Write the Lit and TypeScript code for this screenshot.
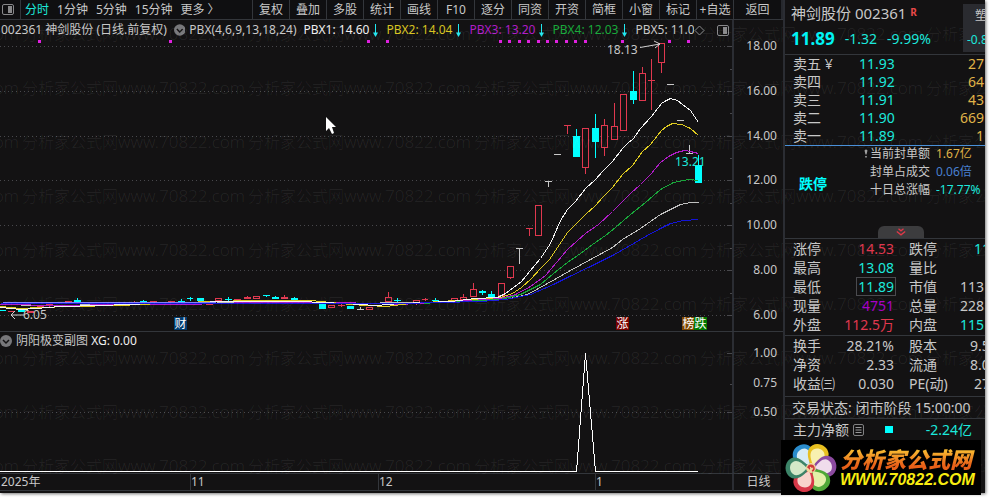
import { LitElement, html, svg, css } from "lit";
import { customElement } from "lit/decorators.js";

const RED = "#e0384f";
const CYAN = "#00ffff";
const GREY = "#c8c8c8";

/* x = left edge, w = body width, top/bottom = body, hi/lo = wick ends */
type Candle = [kind: "up" | "down", x: number, w: number, top: number, bottom: number, hi: number, lo: number];

const candles: Candle[] = [
  ["down", 18, 7, 310, 312, 310, 312],
  ["up", 27, 7, 311, 313, 311, 313],
  ["up", 37, 7, 305, 307, 305, 307],
  ["up", 46, 7, 304, 306, 304, 308],
  ["up", 65, 7, 301, 302, 301, 302],
  ["down", 74, 7, 300, 302, 298, 302],
  ["up", 131, 7, 302, 303, 301, 303],
  ["down", 140, 7, 301, 303, 300, 303],
  ["up", 150, 7, 301, 303, 301, 303],
  ["up", 168, 7, 301, 302, 301, 302],
  ["down", 178, 7, 301, 302, 299, 302],
  ["down", 187, 6, 298, 299, 297, 301],
  ["down", 197, 7, 298, 301, 298, 301],
  ["up", 206, 7, 304, 305, 304, 305],
  ["up", 215, 7, 298, 301, 298, 302],
  ["down", 225, 7, 299, 300, 297, 302],
  ["up", 234, 7, 299, 300, 299, 301],
  ["up", 244, 7, 297, 299, 296, 299],
  ["up", 253, 7, 296, 299, 296, 299],
  ["down", 263, 7, 295, 296, 295, 297],
  ["down", 272, 7, 297, 299, 296, 299],
  ["up", 281, 7, 297, 299, 295, 299],
  ["down", 291, 7, 298, 300, 297, 300],
  ["down", 300, 7, 303, 304, 303, 304],
  ["up", 310, 6, 303, 304, 303, 304],
  ["down", 319, 7, 304, 309, 302, 309],
  ["up", 328, 7, 305, 308, 305, 308],
  ["up", 338, 7, 305, 306, 304, 307],
  ["down", 347, 7, 306, 309, 306, 309],
  ["up", 366, 7, 307, 310, 307, 310],
  ["up", 385, 7, 297, 302, 292, 302],
  ["down", 394, 7, 300, 301, 298, 302],
  ["up", 413, 7, 300, 303, 300, 305],
  ["up", 422, 6, 299, 300, 298, 301],
  ["down", 432, 7, 300, 301, 298, 302],
  ["up", 441, 7, 301, 302, 301, 302],
  ["up", 451, 7, 298, 301, 298, 301],
  ["up", 460, 7, 297, 300, 294, 300],
  ["up", 470, 7, 289, 297, 283, 297],
  ["down", 479, 7, 291, 293, 290, 295],
  ["down", 488, 7, 294, 298, 291, 298],
  ["up", 498, 7, 283, 296, 283, 296],
  ["up", 507, 7, 266, 278, 266, 279],
  ["up", 535, 7, 205, 236, 205, 236],
  ["down", 573, 7, 136, 157, 129, 157],
  ["up", 582, 7, 128, 168, 128, 174],
  ["down", 592, 7, 128, 142, 114, 158],
  ["up", 601, 7, 125, 148, 119, 156],
  ["up", 611, 7, 126, 140, 103, 140],
  ["up", 620, 7, 94, 131, 94, 131],
  ["down", 630, 7, 91, 100, 71, 104],
  ["up", 639, 7, 73, 101, 67, 101],
  ["up", 658, 7, 43, 63, 43, 73],
  ["down", 695, 7, 165, 183, 155, 183],
];

/* candles that opened and closed at one price */
const flats: [color: string, x: number, y: number, hi: number, lo: number][] = [
  [CYAN, 2, 310, 310, 310],
  [RED, 11, 311, 311, 311],
  [GREY, 360, 309, 307, 309],
  [RED, 445, 301, 301, 301],
  [GREY, 519, 248, 248, 264],
  [RED, 529, 228, 228, 236],
  [GREY, 548, 181, 181, 187],
  [GREY, 557, 154, 154, 154],
  [RED, 567, 125, 125, 134],
  [RED, 651, 80, 59, 110],
  [GREY, 670, 84, 84, 84],
  [GREY, 680, 120, 120, 120],
  [GREY, 689, 153, 145, 153],
];

const averages: [color: string, points: string][] = [
  ["#c0c0c0", "0,304 40,305 120,304 250,302 350,303 470,301 505,299 527,294 547,283 570,270 590,259 612,247 622,239 640,228 660,214 672,208 680,204 690,202 698,202"],
  ["#18a83a", "420,303 480,300 500,299 520,294 540,284 553,273 567,262 580,253 592,244 605,235 615,227 630,214 645,202 660,189 673,182 688,179 698,180"],
  ["#b01cc8", "0,304 60,305 120,304 185,304 250,302 340,302 400,304 480,299 500,298 515,294 530,286 545,275 567,249 576,241 585,233 598,224 612,211 630,193 640,184 650,174 660,162 668,156 676,152 684,150 690,151 698,153"],
  ["#e0cc20", "0,306 20,308 40,307 70,306 120,305 180,302 250,300 310,300 350,304 385,306 410,303 470,299 500,297 512,293 521,287 530,279 540,268 549,259 557,247 567,232 576,223 585,214 595,205 603,196 612,187 622,174 632,165 642,151 650,144 661,130 666,126 672,123 681,124 690,128 698,135"],
  ["#f4f4f4", "0,307 20,309 35,308 60,306 100,305 180,302 240,301 300,301 345,303 375,305 400,303 450,301 475,298 497,297 505,293 513,287 521,281 530,270 540,258 550,243 560,220 567,209 575,201 585,188 595,179 602,171 612,161 622,148 627,143 633,138 640,128 651,116 661,103 666,100 670,98 677,100 682,104 690,110 698,122"],
  ["#1414d8", "0,303 250,303 400,303 440,302 480,301 505,299 530,294 553,284 567,277 590,266 612,255 628,246 645,236 660,228 670,223 683,220 698,219"],
  ["#8080ff", "2,302 160,302 215,302"],
];

const signals = [38, 169, 367, 386, 499, 508, 518, 527, 537, 546, 555, 565, 574, 584, 621, 668, 687];
const prices = ["18.00", "16.00", "14.00", "12.00", "10.00", "8.00", "6.00"];
const gridY = [46, 91, 136, 180, 225, 270, 315];
const minorY = [69, 113, 158, 203, 248, 293];

const badges: [label: string, color: string, x: number][] = [
  ["财", "#003c70", 174],
  ["涨", "#780000", 616],
  ["榜", "#804800", 682],
  ["跌", "#007800", 694],
];

const periods = ["分时", "1分钟", "5分钟", "15分钟"];
const tools = ["复权", "叠加", "多股", "统计", "画线", "F10", "逐分", "同资", "开资", "简框", "小窗", "标记", "+自选"];

const indicators = [
  ["PBX1: 14.60", "white"],
  ["PBX2: 14.04", "yellow"],
  ["PBX3: 13.20", "purple"],
  ["PBX4: 12.03", "green"],
];

const asks = [
  ["卖五", "11.93", "27"],
  ["卖四", "11.92", "64"],
  ["卖三", "11.91", "43"],
  ["卖二", "11.90", "669"],
  ["卖一", "11.89", "1"],
];

/* label, value, value class, label, value, value class */
const dayStats = [
  ["涨停", "14.53", "red", "跌停", "11", "price teal"],
  ["最高", "13.08", "teal", "量比", "", "price"],
  ["最低", "11.89", "teal boxed", "市值", "113", "amount"],
  ["现量", "4751", "violet", "总量", "228", "amount"],
  ["外盘", "112.5万", "red", "内盘", "115", "amount teal"],
];
const baseStats = [
  ["换手", "28.21%", "", "股本", "9.5", "money"],
  ["净资", "2.33", "", "流通", "8.0", "money"],
  ["收益㈢", "0.030", "", "PE(动)", "27", "price"],
];

const petals: [color: string, inner: string, angle: number][] = [
  ["#2a8ccc", "#d8ecf4", -30],
  ["#e8c020", "#f8f0b0", 27],
  ["#8c4aa0", "#f0dcec", 84],
  ["#50a838", "#e4f0a8", 146],
  ["#d83848", "#f8d4cc", 207],
  ["#3c8468", "#d4e8c8", 270],
];

@customElement("app-root")
export class AppRoot extends LitElement {
  static styles = css`
    :host {
      display: block;
      box-sizing: border-box;
      min-height: 100vh;
      padding: 0 6px 5px 0;
      background: #fff;
      color: #c8c8c8;
      font: 12px/18px "Noto Sans", "Noto Sans CJK SC", sans-serif;
    }
    * { box-sizing: border-box; }
    button {
      margin: 0;
      padding: 0;
      border: 0;
      background: none;
      color: inherit;
      font: inherit;
      cursor: pointer;
      white-space: nowrap;
    }
    svg { display: block; }
    table { border-spacing: 0; table-layout: fixed; }
    th, td { padding: 0; font-weight: 400; text-align: left; white-space: nowrap; }

    .frame {
      position: relative;
      display: grid;
      grid-template-columns: minmax(0, 1fr) 202px;
      min-height: calc(100vh - 5px);
      background: #131213;
      box-shadow: 1px 1px 3px #777;
    }
    .watermark {
      position: absolute;
      inset: 0;
      overflow: hidden;
      padding-top: 20px;
      color: rgba(255, 255, 255, 0.08);
      font-weight: 300;
      pointer-events: none;
    }
    .mark-row { display: flex; height: 54px; margin-left: -204px; line-height: 27px; }
    .mark { flex: 0 0 226px; font-size: 17px; white-space: nowrap; }
    .mark-cn { font-size: 16px; }

    .main { display: grid; grid-template-rows: 20px minmax(0, 312fr) minmax(0, 141fr) 20px; min-width: 0; }
    .toolbar { display: flex; border-bottom: 1px solid #33363b; background: #0f0f11; }
    .toolbar button { line-height: 16px; }
    .layout-button { width: 21px; padding-left: 2px; border-right: 1px solid #33363b; }
    .periods { display: flex; gap: 8px; padding-left: 4px; }
    .current { color: #1ce8dc; }
    .tools { display: flex; margin-left: auto; }
    .tool { width: 37px; border-left: 1px solid #33363b; }
    .tools .back { width: 50px; border-left: 1px solid #33363b; border-right: 2px solid #26282d; }

    .panel { display: grid; grid-template-columns: minmax(0, 1fr) 51px; }
    .upper { border-bottom: 1px solid #33363b; }
    .plot { display: flex; flex-direction: column; min-width: 0; min-height: 0; }
    .drawing { flex: 1 1 0; width: 100%; min-height: 0; }
    .axis {
      display: flex;
      flex-direction: column;
      justify-content: space-between;
      padding: 17px 6px 7px 0;
      border-left: 2px solid #2b2d33;
      text-align: right;
    }
    .lower .axis { padding: 12px 6px 52px 0; }
    .legend { display: flex; align-items: center; height: 20px; padding-left: 1px; white-space: nowrap; overflow: hidden; }
    .legend .round { margin: 0 4px 0 7px; }
    .indicator { display: flex; align-items: center; flex: 0 0 83px; justify-content: space-between; padding-right: 9px; }
    .formula { margin-right: 7px; }
    .last { flex: 0 1 61px; overflow: hidden; }
    .legend-end { display: flex; align-items: center; gap: 12px; margin-left: auto; padding-right: 3px; }
    .sub-legend { display: flex; align-items: center; gap: 4px; height: 17px; line-height: 17px; }
    .white { color: #f0f0f0; }
    .yellow { color: #d8c420; }
    .purple { color: #b01cc8; }
    .green { color: #18a83a; }

    .dates { display: grid; grid-template-columns: minmax(0, 1fr) 51px; border-top: 1px solid #33363b; padding-bottom: 2px; }
    .months { display: grid; grid-template-columns: 190fr 188fr 217fr 137fr; border-bottom: 1px solid #33363b; }
    .month { border-left: 1px solid #33363b; line-height: 15px; }
    .month:first-child { padding-left: 1px; border-left: 0; }
    .cycle { border-left: 2px solid #2b2d33; border-bottom: 1px solid #33363b; text-align: center; line-height: 16px; }

    .side {
      position: relative;
      overflow: hidden;
      min-width: 0;
      border-left: 2px solid #2b2d33;
      font-size: 14px;
    }
    .header { display: flex; justify-content: space-between; height: 55px; padding-left: 6px; border-bottom: 1px solid #33363b; white-space: nowrap; }
    .name { display: block; font-size: 15px; line-height: 25px; }
    .tag { color: #e84848; font-size: 10px; font-weight: 700; vertical-align: 3px; }
    .quote { display: flex; gap: 10px; line-height: 25px; color: #1ce8dc; }
    .quote-price { font-size: 17px; font-weight: 700; color: #00f4f4; }
    .sector {
      display: flex;
      flex-direction: column;
      gap: 6px;
      flex: 0 0 22px;
      overflow: hidden;
      height: 48px;
      margin-top: 4px;
      padding: 3px 0 0 4px;
      background: #2a2b30;
      font-size: 12px;
      line-height: 18px;
      text-align: left;
    }
    .sector-name { padding-left: 8px; }
    .asks-block { border-bottom: 1px solid #4a90d8; }
    .asks { width: 100%; padding: 0 1px 0 8px; }
    .asks td, .asks th { height: 18px; line-height: 18px; }
    .asks .ask-price { width: 66px; text-align: left; }
    .asks .ask-label { width: 66px; }
    .asks .volume { text-align: right; color: #e0b448; }

    .seal { display: grid; grid-template-columns: 85px 1fr; height: 80px; white-space: nowrap; }
    .seal-state { padding: 29px 0 0 14px; color: #00ffff; font-weight: 700; }
    .seal-list { display: grid; grid-template-columns: 61px 1fr; gap: 2px 5px; align-content: start; margin: 0; font-size: 12px; line-height: 16px; }
    .seal-list dt { position: relative; }
    .seal-list dd { margin: 0; }
    .alert { position: absolute; left: -6px; top: 3px; }
    .gold { color: #e0b448; }
    .blue { color: #4880d0; }
    .teal { color: #1ce8dc; }
    .red { color: #e0384f; }
    .violet { color: #a800c8; }

    .fold-row { display: flex; height: 13px; padding-left: 93px; border-bottom: 1px solid #33363b; }
    .fold { display: grid; place-items: center; width: 46px; border-radius: 6px 6px 0 0; background: #3c3c3e; }

    .stats { width: 217px; margin-left: 8px; }
    .stats-block { padding-bottom: 1px; border-bottom: 1px solid #33363b; }
    .base-block { padding-bottom: 3px; }
    .stats td, .stats th { height: 19px; line-height: 19px; }
    .label { width: 42px; }
    .value { width: 59px; }
    .stats .value { text-align: right; }
    .second { width: 57px; }
    .stats .second { padding-left: 15px; }
    .tail { width: 59px; }
    .stats .tail { text-align: right; }
    .cut { display: inline-block; text-align: left; }
    .price { width: 36px; }
    .money { width: 40px; }
    .amount { width: 50px; }
    .boxed { display: inline-block; margin-right: -2px; padding: 0 2px; outline: 1px solid #4a4a4e; outline-offset: -1px; }
    .status { height: 22px; padding-left: 7px; border-bottom: 1px solid #33363b; line-height: 21px; white-space: nowrap; }
    .flow { display: flex; align-items: center; height: 21px; padding: 0 13px 0 8px; white-space: nowrap; }
    .flow svg { margin-left: 4px; }
    .flow-mark { width: 8px; height: 7px; margin-left: 21px; background: #00ffff; }
    .flow-value { margin-left: auto; }

    .logo {
      position: absolute;
      right: 4px;
      bottom: -2px;
      display: flex;
      align-items: center;
      width: 200px;
      height: 55px;
      padding-left: 2px;
      background: #000;
      color: inherit;
      text-decoration: none;
      white-space: nowrap;
    }
    .logo-text { display: block; margin-left: 1px; font-style: italic; font-weight: 900; }
    .logo-name {
      display: block;
      padding-right: 4px;
      background: linear-gradient(#f8b830 20%, #e86018 80%);
      background-clip: text;
      color: transparent;
      font: italic 900 22px/24px "Noto Sans CJK SC", sans-serif;
    }
    .logo-site { display: block; color: #f8ec10; font: italic 700 16px/20px "Liberation Sans", sans-serif; }
  `;

  private roundIcon() {
    return html`<svg class="round" width="12" height="12" viewBox="0 0 12 12" aria-hidden="true">
      <circle cx="6" cy="6" r="6" fill="#77777a"></circle>
      <path d="M3 5 6 8 9 5" fill="none" stroke="#131213" stroke-width="1.5"></path>
    </svg>`;
  }

  private paneIcon() {
    return html`<svg width="12" height="11" viewBox="0 0 12 11" aria-hidden="true">
      <rect x=".5" y=".5" width="11" height="10" rx="1.5" fill="none" stroke="#88888a"></rect>
      <rect x="6" y="2" width="4" height="7" fill="#88888a"></rect>
    </svg>`;
  }

  private candle([kind, x, w, top, bottom, hi, lo]: Candle) {
    const cx = x + Math.floor(w / 2) + 0.5;
    const color = kind === "up" ? RED : CYAN;
    const h = bottom - top;
    const body = kind === "up" && h > 1
      ? svg`<rect x=${x + 0.5} y=${top + 0.5} width=${w - 1} height=${h - 1} fill="#131213" stroke=${color}></rect>`
      : svg`<rect x=${x} y=${top} width=${w} height=${h} fill=${color}></rect>`;
    return svg`<path d="M${cx} ${hi}V${lo}" stroke=${color}></path>${body}`;
  }

  private priceChart() {
    return html`<svg class="drawing" viewBox="0 40 732 291" role="img" aria-label="日线">
      <g shape-rendering="crispEdges">
        ${gridY.map((y) => svg`<path d="M0 ${y + 0.5}H727" stroke="#48484c" stroke-dasharray="1 3"></path><path d="M727 ${y + 0.5}h5" stroke="#48484c"></path>`)}
        ${minorY.map((y) => svg`<path d="M730 ${y + 0.5}h2" stroke="#48484c"></path>`)}
        ${signals.map((x) => svg`<rect x=${x} y="40" width="3" height="3" fill="#e020e0"></rect>`)}
        ${candles.map((c) => this.candle(c))}
        ${flats.map(([color, x, y, hi, lo]) => svg`<path d="M${x - 3} ${y + 0.5}h7M${x + 0.5} ${hi}V${lo}" stroke=${color}></path>`)}
        ${averages.map(([color, points]) => svg`<polyline points=${points} transform="translate(.5 .5)" fill="none" stroke=${color}></polyline>`)}
        ${badges.map(([, color, x]) => svg`<rect x=${x} y="317" width="13" height="13" fill=${color}></rect>`)}
      </g>
      <path d="M640 47.500 660 44M654 41l6 3-5 4M24 315H11M15 311l-4 4 4 4" fill="none" stroke="#d0d0d0"></path>
      <g font-size="12" fill="#c8c8c8">
        <text x="607" y="54">18.13</text>
        <text x="23" y="319">6.05</text>
        <text x="675" y="166" fill="#1ce8dc">13.21</text>
        ${badges.map(([label, , x]) => svg`<text x=${x + 0.5} y="328" fill="#fff">${label}</text>`)}
      </g>
      <path d="M326 117v14l3-3 3 6 2-1-2-6h4z" fill="#fff"></path>
    </svg>`;
  }

  private signalChart() {
    return html`<svg class="drawing" viewBox="0 349 732 124" role="img" aria-label="XG" shape-rendering="crispEdges">
      <path d="M0 412.500H727" stroke="#48484c" stroke-dasharray="1 3"></path>
      <path d="M727 353.500h5M730 384.500h2M727 412.500h5" stroke="#48484c"></path>
      <path d="M0 471.500H576.500L585.500 353.500 595.500 471.500H698" fill="none" stroke="#fff"></path>
    </svg>`;
  }

  private statTable(rows: string[][]) {
    return html`<table class="stats">
      <colgroup><col class="label"><col class="value"><col class="second"><col class="tail"></colgroup>
      <tbody>
        ${rows.map(([a, av, ac, b, bv, bc]) => html`<tr>
          <th scope="row">${a}</th>
          <td class="value"><span class=${ac}>${av}</span></td>
          <th class="second" scope="row">${b}</th>
          <td class="tail"><span class="cut ${bc}">${bv}</span></td>
        </tr>`)}
      </tbody>
    </table>`;
  }

  render() {
    return html`<div class="frame">
      <div class="watermark" aria-hidden="true">
        ${Array.from({ length: 9 }, () => html`<div class="mark-row">
          ${Array.from({ length: 6 }, () => html`<span class="mark"><span class="mark-cn">分析家公式网</span>www.70822.com</span>`)}
        </div>`)}
      </div>

      <main class="main">
        <nav class="toolbar">
          <button class="layout-button" aria-label="布局">${this.paneIcon()}</button>
          <div class="periods">
            ${periods.map((p, i) => html`<button class=${i === 0 ? "current" : ""}>${p}</button>`)}
            <button>更多 〉</button>
          </div>
          <div class="tools">
            ${tools.map((t) => html`<button class="tool">${t}</button>`)}
            <button class="back">返回</button>
          </div>
        </nav>

        <section class="panel upper">
          <div class="plot">
            <div class="legend">
              <span>002361 神剑股份 (日线.前复权)</span>
              ${this.roundIcon()}
              <span class="formula">PBX(4,6,9,13,18,24)</span>
              ${indicators.map(([text, tone]) => html`<span class="indicator ${tone}">${text}
                <svg width="5" height="13" viewBox="0 0 5 13" aria-hidden="true"><path d="M2.500 0V9" stroke="#20e8f0"></path><path d="M0 8.500h5L2.500 13z" fill="#20e8f0"></path></svg>
              </span>`)}
              <span class="last">PBX5: 11.0</span>
              <span class="legend-end">
                <svg width="11" height="11" viewBox="0 0 11 11" aria-hidden="true"><path d="M5.500 1 10 5.500 5.500 10 1 5.500z" fill="none" stroke="#88888a"></path></svg>
                ${this.paneIcon()}
              </span>
            </div>
            ${this.priceChart()}
          </div>
          <div class="axis">${prices.map((p) => html`<span>${p}</span>`)}</div>
        </section>

        <section class="panel lower">
          <div class="plot">
            <div class="sub-legend">${this.roundIcon()}<span>阴阳极变副图 <span class="white">XG: 0.00</span></span></div>
            ${this.signalChart()}
          </div>
          <div class="axis"><span>1.00</span><span>0.75</span><span>0.50</span></div>
        </section>

        <footer class="dates">
          <div class="months">
            <span class="month">2025年</span><span class="month">11</span><span class="month">12</span><span class="month">1</span>
          </div>
          <button class="cycle">日线</button>
        </footer>
      </main>

      <aside class="side">
        <header class="header">
          <div>
            <span class="name">神剑股份 002361 <span class="tag">R</span></span>
            <div class="quote"><span class="quote-price">11.89</span><span>-1.32</span><span>-9.99%</span></div>
          </div>
          <button class="sector"><span class="sector-name">塑</span><span class="teal">-0.8</span></button>
        </header>

        <div class="asks-block">
          <table class="asks">
            <colgroup><col class="ask-label"><col class="ask-price"><col></colgroup>
            <tbody>
              ${asks.map(([label, price, volume], i) => html`<tr>
                <th scope="row">${label}${i === 0 ? " ¥" : ""}</th>
                <td class="teal">${price}</td>
                <td class="volume">${volume}</td>
              </tr>`)}
            </tbody>
          </table>
        </div>

        <section class="seal">
          <div class="seal-state">跌停</div>
          <dl class="seal-list">
            <dt><svg class="alert" width="4" height="9" viewBox="0 0 4 9" aria-hidden="true"><path d="M.5 1.500Q2-.5 3.500 1.500L2.500 5.500h-1zM1.200 7h1.600v1.600H1.200z" fill="#a0a0a0"></path></svg>当前封单额</dt>
            <dd class="gold">1.67亿</dd>
            <dt>封单占成交</dt><dd class="blue">0.06倍</dd>
            <dt>十日总涨幅</dt><dd class="teal">-17.77%</dd>
          </dl>
        </section>
        <div class="fold-row">
          <button class="fold" aria-label="展开">
            <svg width="10" height="8" viewBox="0 0 10 8" aria-hidden="true"><path d="M2.500.8 5 2.800 7.500.8M.8 3.500 5 6.800 9.200 3.500" fill="none" stroke="#e03848" stroke-width="1.300"></path></svg>
          </button>
        </div>

        <div class="stats-block">${this.statTable(dayStats)}</div>
        <div class="stats-block base-block">${this.statTable(baseStats)}</div>
        <div class="status">交易状态: 闭市阶段 15:00:00</div>
        <div class="flow">
          <span>主力净额</span>
          <svg width="11" height="12" viewBox="0 0 11 12" aria-hidden="true"><rect x=".5" y=".5" width="10" height="11" rx="1.500" fill="none" stroke="#808082"></rect><path d="M2.500 3.500h6M2.500 6h6M2.500 8.500h6" stroke="#98989a"></path></svg>
          <span class="flow-mark"></span>
          <span class="flow-value teal">-2.24亿</span>
        </div>
      </aside>

      <a class="logo" href="#" aria-label="分析家公式网">
        <svg width="56" height="52" viewBox="-28 -26 56 52" aria-hidden="true">
          ${petals.map(([color, inner, angle]) => svg`<g transform="rotate(${angle})">
            <path d="M0-1C-9-8-13-15-9-21-5-27 5-27 9-21 13-15 8-8 0-1Z" fill=${color}></path>
            <path d="M0-4C-6-9-9-14-6-18-3-22 4-22 6-18 9-14 5-9 0-4Z" fill=${inner}></path>
          </g>`)}
          <circle r="5" fill="#f0d8a0"></circle>
          <path d="M-3 0A3 3 0 1 1 1 3M-1 1A1.500 1.500 0 1 1 1 0" fill="none" stroke="#d03838" stroke-width="1.500"></path>
        </svg>
        <span class="logo-text"><span class="logo-name">分析家公式网</span><span class="logo-site">WWW.70822.COM</span></span>
      </a>
    </div>`;
  }
}
